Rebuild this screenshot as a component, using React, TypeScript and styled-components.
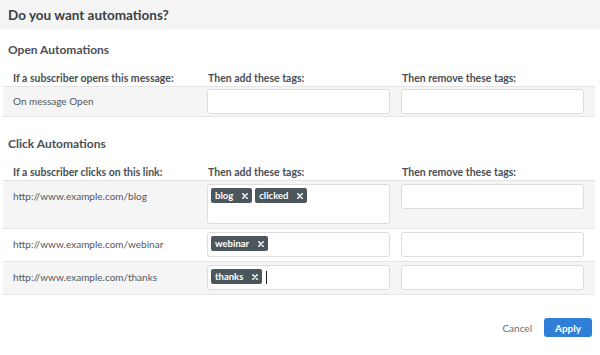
import React from "react";
import styled, { createGlobalStyle } from "styled-components";

const GlobalStyle = createGlobalStyle`
  html, body {
    margin: 0;
    padding: 0;
    background: #ffffff;
    font-family: Lato, "Open Sans", sans-serif;
    color: #3d4247;
  }
`;

type Row = {
  label: string;
  add: string[];
  focused?: boolean;
};

const openRows: Row[] = [{ label: "On message Open", add: [] }];

const clickRows: Row[] = [
  { label: "http://www.example.com/blog", add: ["blog", "clicked"] },
  { label: "http://www.example.com/webinar", add: ["webinar"] },
  { label: "http://www.example.com/thanks", add: ["thanks"], focused: true },
];

const CloseIcon = () => (
  <svg width="6" height="6" viewBox="0 0 6 6">
    <path d="M0.8 0.8 L5.2 5.2 M5.2 0.8 L0.8 5.2" stroke="#ffffff" strokeWidth="1.5" strokeLinecap="round" />
  </svg>
);

const TagInput = ({ tags, focused }: { tags: string[]; focused?: boolean }) => (
  <TagBox>
    {tags.map((t) => (
      <Tag key={t}>
        <TagLabel>{t}</TagLabel>
        <TagRemove>
          <CloseIcon />
        </TagRemove>
      </Tag>
    ))}
    <TypeArea $focused={focused} />
  </TagBox>
);

const AutomationTable = ({
  title,
  trigger,
  rows,
  compact,
}: {
  title: string;
  trigger: string;
  rows: Row[];
  compact?: boolean;
}) => (
  <Section>
    <SectionTitle>{title}</SectionTitle>
    <HeadRow>
      <HeadCell $first>{trigger}</HeadCell>
      <HeadCell>Then add these tags:</HeadCell>
      <HeadCell>Then remove these tags:</HeadCell>
    </HeadRow>
    <Rows>
      {rows.map((r, i) => (
        <DataRow key={r.label} $striped={i % 2 === 0} $compact={compact}>
          <LabelCell>{r.label}</LabelCell>
          <InputCell>
            <TagInput tags={r.add} focused={r.focused} />
          </InputCell>
          <InputCell>
            <TagInput tags={[]} />
          </InputCell>
        </DataRow>
      ))}
    </Rows>
  </Section>
);

const App = () => {
  return (
    <>
      <GlobalStyle />
      <Modal>
        <Header>Do you want automations?</Header>
        <AutomationTable
          title="Open Automations"
          trigger="If a subscriber opens this message:"
          rows={openRows}
          compact
        />
        <AutomationTable
          title="Click Automations"
          trigger="If a subscriber clicks on this link:"
          rows={clickRows}
        />
        <Footer>
          <CancelButton>Cancel</CancelButton>
          <ApplyButton>Apply</ApplyButton>
        </Footer>
      </Modal>
    </>
  );
};

export default App;

const Modal = styled.div`
  width: 600px;
  height: 355px;
  display: flex;
  flex-direction: column;
  background: #ffffff;
`;

const Header = styled.div`
  height: 29px;
  display: flex;
  align-items: center;
  padding: 0 8px;
  background: #f4f4f4;
  font-size: 13.5px;
  font-weight: 700;
  color: #3a3f44;
`;

const Section = styled.div`
  display: flex;
  flex-direction: column;
  padding: 0 5px 0 3px;
  margin-top: 11px;

  & + & {
    margin-top: 17px;
  }
`;

const SectionTitle = styled.div`
  height: 20px;
  line-height: 20px;
  padding-left: 5px;
  font-size: 12px;
  font-weight: 700;
  color: #4a4f54;
`;

const HeadRow = styled.div`
  display: grid;
  grid-template-columns: 200px 194px 1fr;
  margin-top: 10px;
  height: 16px;
  align-items: center;
`;

const HeadCell = styled.div<{ $first?: boolean }>`
  padding-left: ${(p) => (p.$first ? "10px" : "5px")};
  font-size: 10.5px;
  font-weight: 700;
  color: #4a4f54;
  white-space: nowrap;
`;

const Rows = styled.div`
  border-top: 1px solid #e4e4e4;
`;

const DataRow = styled.div<{ $striped: boolean; $compact?: boolean }>`
  display: grid;
  grid-template-columns: 200px 194px 1fr;
  align-items: start;
  padding: ${(p) => (p.$compact ? "2px 0" : "3px 0 4px")};
  border-bottom: 1px solid #e4e4e4;
  background: ${(p) => (p.$striped ? "#f5f5f5" : "#ffffff")};
`;

const LabelCell = styled.div`
  padding-left: 10px;
  height: 25px;
  line-height: 25px;
  font-size: 10px;
  color: #53585d;
  white-space: nowrap;
`;

const InputCell = styled.div`
  padding-left: 4px;
`;

const TagBox = styled.div`
  width: 183px;
  box-sizing: border-box;
  min-height: 25px;
  display: flex;
  flex-wrap: wrap;
  align-items: center;
  align-content: flex-start;
  gap: 0 3px;
  padding: 3px;
  background: #ffffff;
  border: 1px solid #dddddd;
  border-radius: 3px;
`;

const Tag = styled.div`
  height: 15px;
  margin-bottom: 1px;
  display: flex;
  align-items: center;
  background: #4b565d;
  border-radius: 2px;
  color: #ffffff;
  font-size: 9.5px;
  font-weight: 700;
`;

const TagLabel = styled.span`
  padding-left: 4px;
`;

const TagRemove = styled.span`
  display: flex;
  align-items: center;
  padding: 0 4px 0 9px;
`;

const TypeArea = styled.span<{ $focused?: boolean }>`
  flex: 0 0 100px;
  height: 16px;
  display: flex;
  align-items: center;
  &::before {
    content: "";
    display: ${(p) => (p.$focused ? "block" : "none")};
    width: 1px;
    height: 13px;
    margin-left: 1px;
    background: #222222;
  }
`;

const Footer = styled.div`
  display: flex;
  justify-content: flex-end;
  align-items: center;
  gap: 12px;
  margin-top: 23px;
  padding-right: 8px;
`;

const CancelButton = styled.div`
  font-size: 10px;
  color: #6b7075;
  cursor: pointer;
`;

const ApplyButton = styled.div`
  width: 48px;
  height: 19px;
  display: flex;
  align-items: center;
  justify-content: center;
  background: #2f7fd8;
  border-radius: 3px;
  color: #ffffff;
  font-size: 10px;
  font-weight: 700;
  cursor: pointer;
`;
